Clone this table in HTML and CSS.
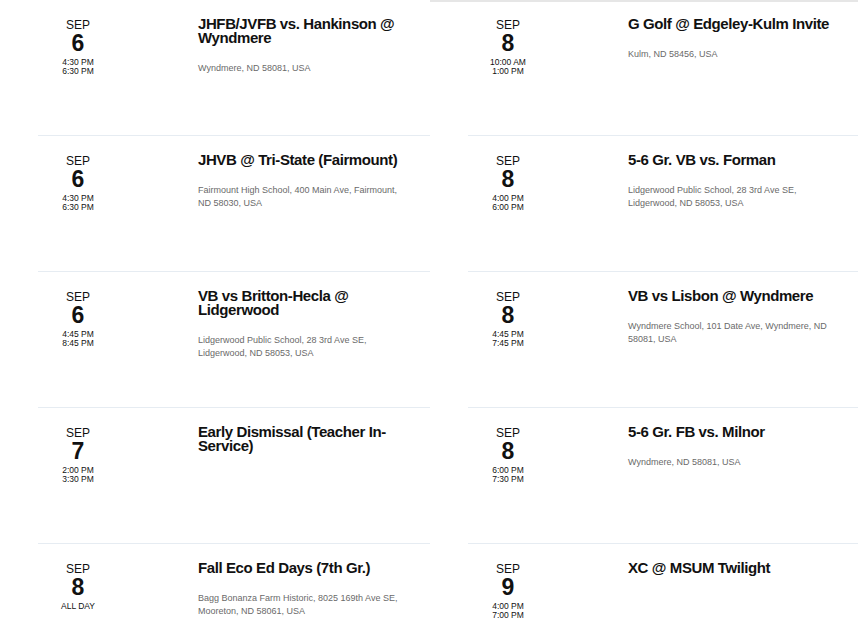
FILE: index.html
```html
<!DOCTYPE html>
<html>
<head>
<meta charset="utf-8">
<link rel="stylesheet" href="styles.css">
</head>
<body>
<div class="topline"></div>
<div class="grid">
  <div class="col">
    <div class="event">
      <div class="date"><div class="mon">SEP</div><div class="day">6</div><div class="time">4:30 PM<br>6:30 PM</div></div>
      <div class="info"><h3>JHFB/JVFB vs. Hankinson @ Wyndmere</h3><p>Wyndmere, ND 58081, USA</p></div>
    </div>
    <div class="event">
      <div class="date"><div class="mon">SEP</div><div class="day">6</div><div class="time">4:30 PM<br>6:30 PM</div></div>
      <div class="info"><h3>JHVB @ Tri-State (Fairmount)</h3><p>Fairmount High School, 400 Main Ave, Fairmount, ND 58030, USA</p></div>
    </div>
    <div class="event">
      <div class="date"><div class="mon">SEP</div><div class="day">6</div><div class="time">4:45 PM<br>8:45 PM</div></div>
      <div class="info"><h3>VB vs Britton-Hecla @ Lidgerwood</h3><p>Lidgerwood Public School, 28 3rd Ave SE, Lidgerwood, ND 58053, USA</p></div>
    </div>
    <div class="event">
      <div class="date"><div class="mon">SEP</div><div class="day">7</div><div class="time">2:00 PM<br>3:30 PM</div></div>
      <div class="info"><h3>Early Dismissal (Teacher In-Service)</h3></div>
    </div>
    <div class="event">
      <div class="date"><div class="mon">SEP</div><div class="day">8</div><div class="time allday">ALL DAY</div></div>
      <div class="info"><h3>Fall Eco Ed Days (7th Gr.)</h3><p>Bagg Bonanza Farm Historic, 8025 169th Ave SE, Mooreton, ND 58061, USA</p></div>
    </div>
  </div>
  <div class="col">
    <div class="event">
      <div class="date"><div class="mon">SEP</div><div class="day">8</div><div class="time">10:00 AM<br>1:00 PM</div></div>
      <div class="info"><h3>G Golf @ Edgeley-Kulm Invite</h3><p>Kulm, ND 58456, USA</p></div>
    </div>
    <div class="event">
      <div class="date"><div class="mon">SEP</div><div class="day">8</div><div class="time">4:00 PM<br>6:00 PM</div></div>
      <div class="info"><h3>5-6 Gr. VB vs. Forman</h3><p>Lidgerwood Public School, 28 3rd Ave SE, Lidgerwood, ND 58053, USA</p></div>
    </div>
    <div class="event">
      <div class="date"><div class="mon">SEP</div><div class="day">8</div><div class="time">4:45 PM<br>7:45 PM</div></div>
      <div class="info"><h3>VB vs Lisbon @ Wyndmere</h3><p>Wyndmere School, 101 Date Ave, Wyndmere, ND 58081, USA</p></div>
    </div>
    <div class="event">
      <div class="date"><div class="mon">SEP</div><div class="day">8</div><div class="time">6:00 PM<br>7:30 PM</div></div>
      <div class="info"><h3>5-6 Gr. FB vs. Milnor</h3><p>Wyndmere, ND 58081, USA</p></div>
    </div>
    <div class="event">
      <div class="date"><div class="mon">SEP</div><div class="day">9</div><div class="time">4:00 PM<br>7:00 PM</div></div>
      <div class="info"><h3>XC @ MSUM Twilight</h3></div>
    </div>
  </div>
</div>
</body>
</html>
```
FILE: styles.css
```css
html, body {
  margin: 0;
  padding: 0;
  background: #fff;
  font-family: "Liberation Sans", Arial, sans-serif;
  color: #111;
  overflow: hidden;
}
.topline {
  position: absolute;
  top: 0;
  left: 430px;
  width: 428px;
  height: 2px;
  background: #e6e6e6;
}
.grid {
  display: grid;
  grid-template-columns: 430px 430px;
}
.col {
  display: flex;
  flex-direction: column;
}
.event {
  margin-left: 38px;
  height: 136px;
  border-bottom: 1px solid #e6ecf2;
  display: flex;
  box-sizing: border-box;
}
.col:last-child .event {
  margin-right: 2px;
}
.date {
  width: 80px;
  flex: none;
  text-align: center;
  padding-top: 19px;
}
.mon {
  font-size: 12px;
  line-height: 13px;
}
.day {
  font-size: 23px;
  font-weight: bold;
  line-height: 20px;
  margin-top: 1px;
}
.time {
  font-size: 8.5px;
  line-height: 8.5px;
  margin-top: 5px;
}
.time.allday {
  margin-top: 5px;
}
.info {
  margin-left: 80px;
  padding-top: 17px;
  width: 210px;
}
h3 {
  margin: 0;
  font-size: 15px;
  line-height: 14px;
  font-weight: bold;
  letter-spacing: -0.4px;
}
p {
  margin: 17px 0 0;
  max-width: 204px;
  font-size: 9px;
  line-height: 13px;
  color: #6a6a6a;
}
```
